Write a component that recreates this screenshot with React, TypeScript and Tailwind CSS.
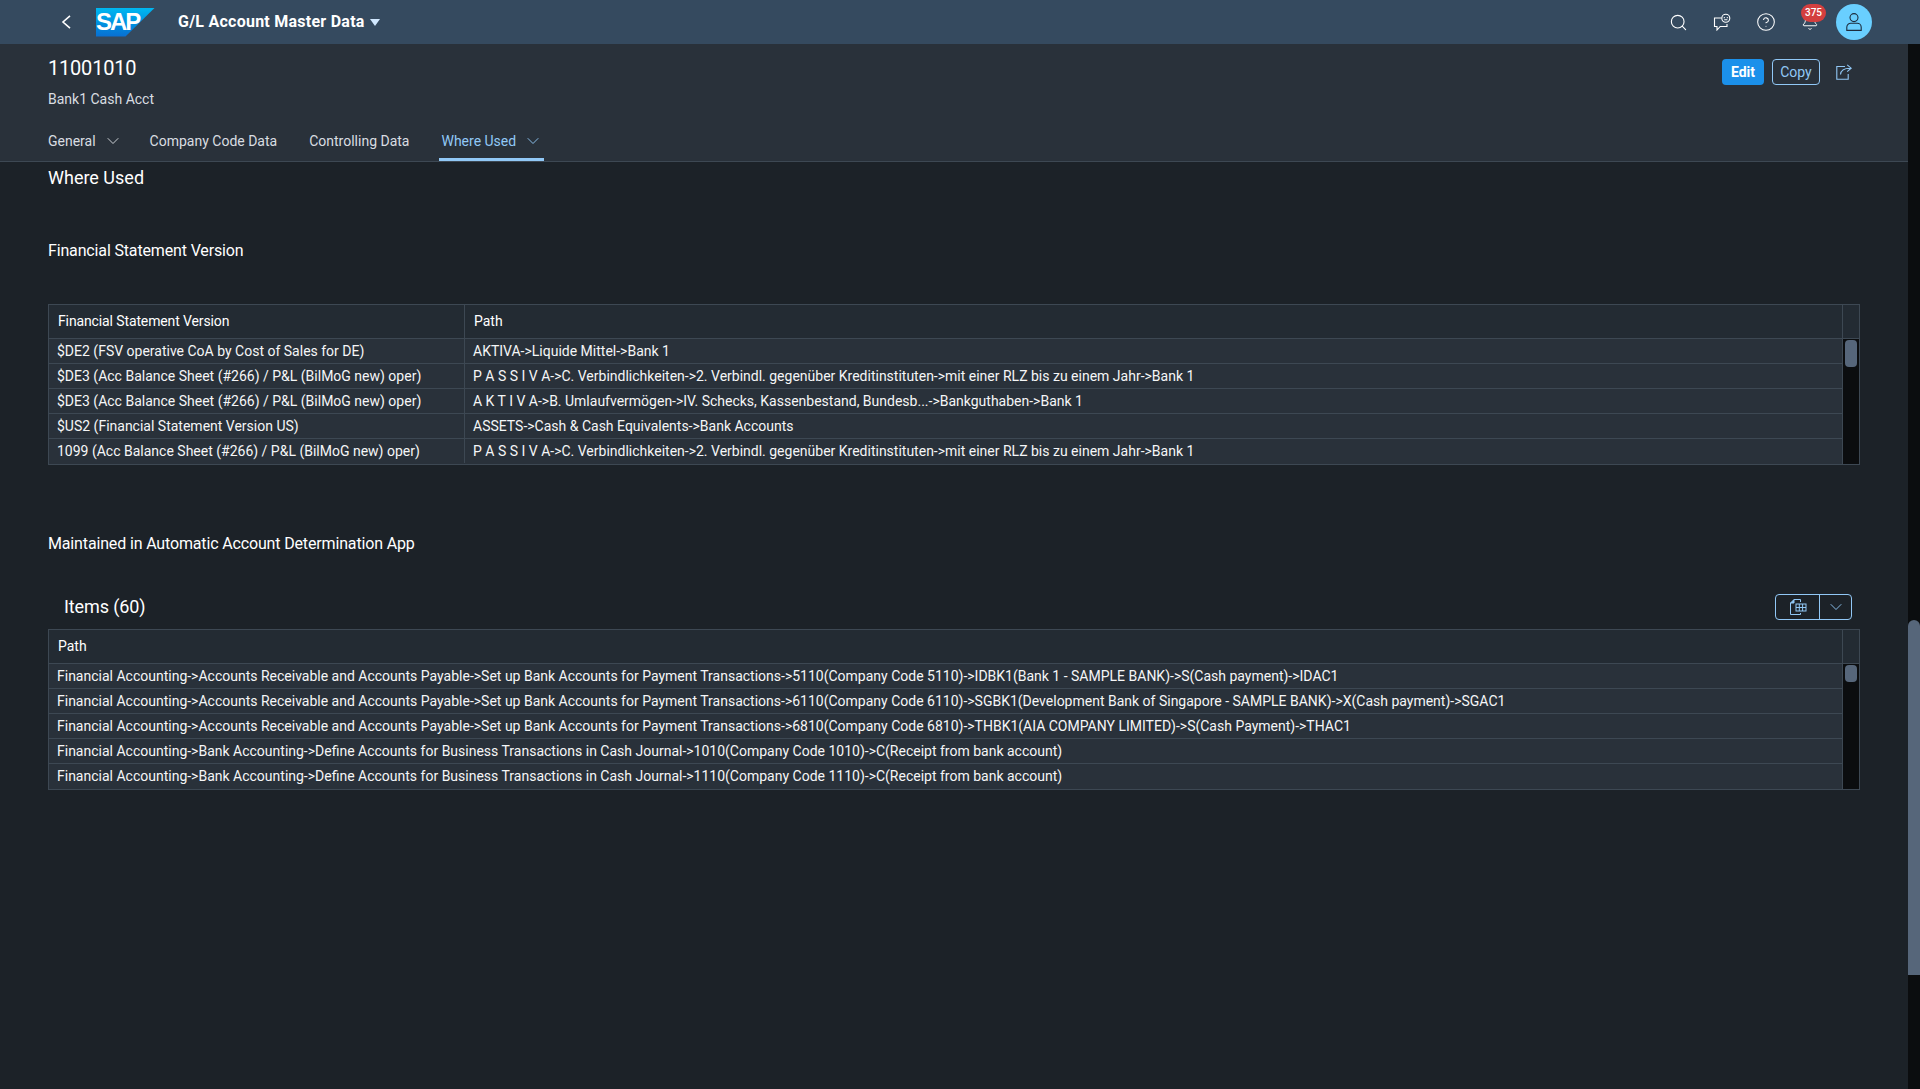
import { Bell, ChevronDown, CircleHelp, Search } from "lucide-react";

const fsvRows = [
  ["$DE2 (FSV operative CoA by Cost of Sales for DE)", "AKTIVA->Liquide Mittel->Bank 1"],
  ["$DE3 (Acc Balance Sheet (#266) / P&L (BilMoG new) oper)", "P A S S I V A->C. Verbindlichkeiten->2. Verbindl. gegenüber Kreditinstituten->mit einer RLZ bis zu einem Jahr->Bank 1"],
  ["$DE3 (Acc Balance Sheet (#266) / P&L (BilMoG new) oper)", "A K T I V A->B. Umlaufvermögen->IV. Schecks, Kassenbestand, Bundesb...->Bankguthaben->Bank 1"],
  ["$US2 (Financial Statement Version US)", "ASSETS->Cash & Cash Equivalents->Bank Accounts"],
  ["1099 (Acc Balance Sheet (#266) / P&L (BilMoG new) oper)", "P A S S I V A->C. Verbindlichkeiten->2. Verbindl. gegenüber Kreditinstituten->mit einer RLZ bis zu einem Jahr->Bank 1"],
];

const itemRows = [
  "Financial Accounting->Accounts Receivable and Accounts Payable->Set up Bank Accounts for Payment Transactions->5110(Company Code 5110)->IDBK1(Bank 1 - SAMPLE BANK)->S(Cash payment)->IDAC1",
  "Financial Accounting->Accounts Receivable and Accounts Payable->Set up Bank Accounts for Payment Transactions->6110(Company Code 6110)->SGBK1(Development Bank of Singapore - SAMPLE BANK)->X(Cash payment)->SGAC1",
  "Financial Accounting->Accounts Receivable and Accounts Payable->Set up Bank Accounts for Payment Transactions->6810(Company Code 6810)->THBK1(AIA COMPANY LIMITED)->S(Cash Payment)->THAC1",
  "Financial Accounting->Bank Accounting->Define Accounts for Business Transactions in Cash Journal->1010(Company Code 1010)->C(Receipt from bank account)",
  "Financial Accounting->Bank Accounting->Define Accounts for Business Transactions in Cash Journal->1110(Company Code 1110)->C(Receipt from bank account)",
];

const ScrollColumn = ({ thumb }: { thumb: string }) => (
  <div className="w-[17px] shrink-0 flex flex-col border-l border-[#3d4853]">
    <div className="h-[34px] bg-[#232b33] border-b border-[#3d4853]" />
    <div className="flex-1 bg-[#0b0d0f] px-[2px] pt-px">
      <div className={`${thumb} bg-[#56667a] rounded-[4px]`} />
    </div>
  </div>
);

const App = () => {
  return (
    <div className="h-[1089px] w-[1920px] overflow-hidden flex flex-col bg-[#1c2228] text-[#f5f6f7] text-sm font-['Roboto',sans-serif]">
      {/* shell bar */}
      <div className="h-11 shrink-0 bg-[#354a5f] flex items-center pl-[61px] pr-[48px] text-white">
        <svg viewBox="0 0 10 14" className="h-[14px] w-[10px]" fill="none" stroke="currentColor" strokeWidth="1.6">
          <path d="M9 .8 2 7l7 6.2" />
        </svg>
        <div className="ml-[25px] h-[29px] w-[59px] flex items-center bg-gradient-to-b from-[#00b8f1] to-[#0a6ed1] [clip-path:polygon(0_0,100%_0,50%_100%,0_100%)]">
          <span className="text-[24px] font-bold tracking-[-2px] font-['Liberation_Sans',sans-serif] leading-none">SAP</span>
        </div>
        <span className="ml-[23px] font-bold text-base tracking-[0.25px]">G/L Account Master Data</span>
        <span className="ml-[5px] h-0 w-0 border-x-[5px] border-t-[7px] border-x-transparent border-t-[#d1e8ff]" />
        <div className="ml-auto flex items-center">
          <div className="w-11 flex justify-center">
            <Search className="h-[19px] w-[19px]" strokeWidth={1.4} />
          </div>
          <div className="w-11 flex justify-center">
            <svg viewBox="0 0 18 18" className="h-[18px] w-[18px]" fill="none" stroke="currentColor" strokeWidth="1.1">
              <path d="M8.5 5H1.5v8.5H4V17l3.2-3.5H14V11" />
              <circle cx="12.8" cy="5.2" r="4" />
              <path d="M10.8 4.6h1M13.8 4.6h1M11.2 6.8h3.2" />
            </svg>
          </div>
          <div className="w-11 flex justify-center">
            <CircleHelp className="h-5 w-5" strokeWidth={1.25} />
          </div>
          <div className="w-11 flex justify-center">
            <div className="relative">
              <Bell className="h-[18px] w-[18px]" strokeWidth={1.3} />
              <span className="absolute -top-[9px] left-0 h-[18px] w-[25px] rounded-full bg-[#d33f3f] text-[10px] font-medium flex items-center justify-center">375</span>
            </div>
          </div>
          <div className="ml-1 h-9 w-9 rounded-full bg-[#69cfff] flex items-center justify-center text-[#1d2d3e]">
            <svg viewBox="0 0 18 18" className="h-[18px] w-[18px]" fill="none" stroke="currentColor" strokeWidth="1.1">
              <circle cx="9" cy="4.6" r="4" />
              <path d="M1.8 17.4v-3.2A4 4 0 0 1 5.8 10.2h6.4a4 4 0 0 1 4 4v3.2z" />
            </svg>
          </div>
        </div>
      </div>

      <div className="flex-1 flex min-h-0">
        <div className="flex-1 min-w-0 flex flex-col">
          {/* object header */}
          <div className="h-[118px] shrink-0 bg-[#29313a] border-b border-[#3d4853] px-12 relative flex flex-col">
            <div className="text-[20px] leading-6 mt-3 text-white tracking-[-0.2px]">11001010</div>
            <div className="text-[#d9dde1] mt-[9px] leading-5">Bank1 Cash Acct</div>
            <div className="mt-auto flex items-center h-[37px] pb-[3px] text-[#d9dde1] -ml-[2px]">
              <div className="flex items-center gap-[7px] pl-[2px] mr-[27px]">
                General
                <ChevronDown className="h-5 w-5" strokeWidth={1.1} />
              </div>
              <div className="mr-[32px]">Company Code Data</div>
              <div className="mr-[30px]">Controlling Data</div>
              <div className="h-[37px] -mb-[3px] w-[105px] border-b-[3px] border-[#91c8f6] text-[#91c8f6] flex items-center gap-[7px] pl-[2px]">
                <span>Where Used</span>
                <ChevronDown className="h-5 w-5" strokeWidth={1.1} />
              </div>
            </div>
            <div className="absolute right-[56px] top-[15px] flex items-center">
              <button className="h-[26px] w-[42px] rounded-[4px] bg-[#1b90ea] text-white font-bold">Edit</button>
              <button className="ml-2 h-[26px] w-[48px] rounded-[4px] border border-[#91c8f6] text-[#91c8f6]">Copy</button>
              <svg viewBox="0 0 16 16" className="ml-4 h-4 w-4 text-[#91c8f6]" fill="none" stroke="currentColor" strokeWidth="1.1">
                <path d="M9 2.5H.8v12.7h11.4V10" />
                <path d="M4.5 10.5C4.8 6.5 8 4 14.8 4.2M11.2.8l4 3.4-4 3.4" />
              </svg>
            </div>
          </div>

          {/* content */}
          <div className="flex-1 pl-12 pr-[48px] flex flex-col">
            <h2 className="text-lg leading-6 mt-[4px] text-white">Where Used</h2>
            <h3 className="text-base leading-6 mt-[49px] text-white tracking-[-0.15px]">Financial Statement Version</h3>

            <div className="mt-[41px] flex border border-[#3d4853] w-[1812px]">
              <div className="flex-1 min-w-0">
                <div className="h-[34px] bg-[#232b33] border-b border-[#3d4853] flex items-center text-white">
                  <div className="w-[416px] pl-[9px] pb-[2px] border-r border-[#3d4853] h-full flex items-center tracking-[-0.12px]">Financial Statement Version</div>
                  <div className="pl-[9px] pb-[2px]">Path</div>
                </div>
                {fsvRows.map((row, i) => (
                  <div key={i} className="h-[25px] bg-[#29313a] border-b border-[#3d4853] last:border-b-transparent flex items-center">
                    <div className="w-[416px] pl-2 border-r border-[#3d4853] h-full flex items-center">{row[0]}</div>
                    <div className="pl-2">{row[1]}</div>
                  </div>
                ))}
              </div>
              <ScrollColumn thumb="h-[27px] w-3" />
            </div>

            <h3 className="text-base leading-6 mt-[67px] text-white tracking-[-0.15px]">Maintained in Automatic Account Determination App</h3>

            <div className="mt-[38px] h-[26px] flex items-center justify-between pl-4 pr-2">
              <span className="text-lg text-white tracking-[-0.1px]">Items (60)</span>
              <div className="flex h-[26px] w-[77px] rounded-[4px] border border-[#91c8f6] text-[#91c8f6]">
                <div className="w-[44px] border-r border-[#91c8f6] flex items-center justify-center">
                  <svg viewBox="0 0 18 18" className="h-[18px] w-[18px]" fill="none" stroke="currentColor" strokeWidth="1">
                    <path d="M11.5 4V1.5H5L1.5 5v11.5h10V15" />
                    <path d="M1.5 5H5V1.5" fill="currentColor" />
                    <rect x="7" y="6" width="10" height="7" />
                    <path d="M10.3 6v7M13.6 6v7M7 9.5h10" />
                  </svg>
                </div>
                <div className="flex-1 flex items-center justify-center">
                  <ChevronDown className="h-5 w-5" strokeWidth={1.1} />
                </div>
              </div>
            </div>

            <div className="mt-[9px] flex border border-[#3d4853] w-[1812px]">
              <div className="flex-1 min-w-0">
                <div className="h-[34px] bg-[#232b33] border-b border-[#3d4853] flex items-center pl-[9px] pb-[2px] text-white">Path</div>
                {itemRows.map((row, i) => (
                  <div key={i} className="h-[25px] bg-[#29313a] border-b border-[#3d4853] last:border-b-transparent flex items-center pl-2">{row}</div>
                ))}
              </div>
              <ScrollColumn thumb="h-[17px] w-3" />
            </div>
          </div>
        </div>

        {/* page scrollbar */}
        <div className="w-3 shrink-0 bg-[#0b0d0f] pt-[576px]">
          <div className="h-[355px] bg-[#56667a] rounded-t-[6px]" />
        </div>
      </div>
    </div>
  );
};

export default App;
